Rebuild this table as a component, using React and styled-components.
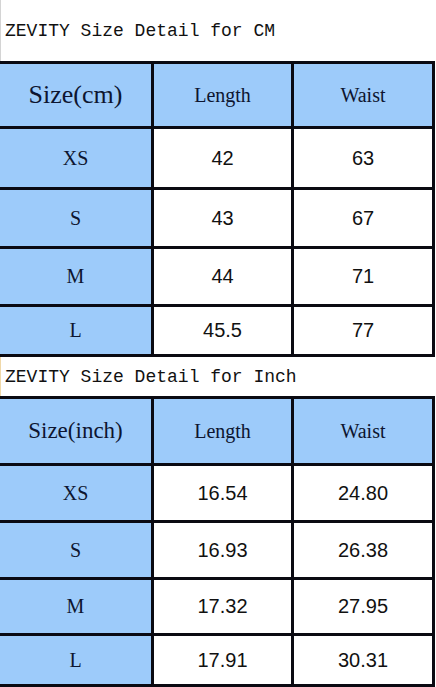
import styled, { createGlobalStyle } from "styled-components";

const GlobalStyle = createGlobalStyle`
  html, body {
    margin: 0;
    padding: 0;
    background: #fff;
  }
`;

const Page = styled.div`
  width: 436px;
  height: 687px;
  overflow: hidden;
  background: #fff;
`;

const Title = styled.div`
  height: ${(p) => p.h}px;
  display: flex;
  align-items: ${(p) => (p.top ? "flex-end" : "center")};
  padding: 0 0 ${(p) => (p.top ? 20 : 0)}px 4px;
  box-sizing: border-box;
  border-left: 1px solid ${(p) => (p.top ? "#d4d4d4" : "#f0d8a8")};
  font-family: "Liberation Mono", "DejaVu Sans Mono", monospace;
  font-size: 18px;
  color: #111;
  white-space: nowrap;
`;

const Sheet = styled.div`
  width: 435px;
  display: grid;
  grid-template-columns: 151px 137px 138px;
  grid-template-rows: ${(p) => p.rows};
  gap: 3px;
  padding: 3px 3px 3px 0;
  box-sizing: border-box;
  background: #0a0a12;
`;

const Cell = styled.div`
  display: flex;
  align-items: center;
  justify-content: center;
  background: ${(p) => (p.blue ? "#9dcbfa" : "#fff")};
  color: ${(p) => (p.blue ? "#0d1530" : "#111")};
  font-family: ${(p) =>
    p.num
      ? '"Liberation Sans", Arial, sans-serif'
      : '"Liberation Serif", "Times New Roman", serif'};
  font-size: ${(p) => p.size || 20}px;
`;

const cmRows = [
  ["XS", "42", "63"],
  ["S", "43", "67"],
  ["M", "44", "71"],
  ["L", "45.5", "77"],
];

const inchRows = [
  ["XS", "16.54", "24.80"],
  ["S", "16.93", "26.38"],
  ["M", "17.32", "27.95"],
  ["L", "17.91", "30.31"],
];

const SizeTable = ({ label, labelSize, rows, heights }) => (
  <Sheet rows={heights}>
    <Cell blue size={labelSize}>
      {label}
    </Cell>
    <Cell blue>Length</Cell>
    <Cell blue>Waist</Cell>
    {rows.map(([size, length, waist]) => [
      <Cell blue key={size}>
        {size}
      </Cell>,
      <Cell num key={size + "-l"}>
        {length}
      </Cell>,
      <Cell num key={size + "-w"}>
        {waist}
      </Cell>,
    ])}
  </Sheet>
);

export default function App() {
  return (
    <Page>
      <GlobalStyle />
      <Title h={61} top>
        ZEVITY Size Detail for CM
      </Title>
      <SizeTable
        label="Size(cm)"
        labelSize={26}
        rows={cmRows}
        heights="62px 58px 56px 55px 47px"
      />
      <Title h={39}>ZEVITY Size Detail for Inch</Title>
      <SizeTable
        label="Size(inch)"
        labelSize={23}
        rows={inchRows}
        heights="64px 54px 54px 53px 48px"
      />
    </Page>
  );
}
